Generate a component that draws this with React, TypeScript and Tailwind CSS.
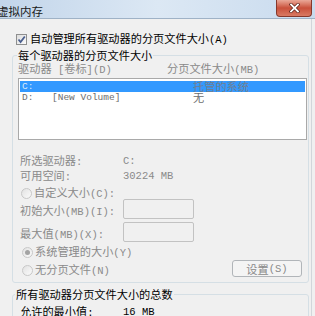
import React from 'react';

const cjk = "font-['Noto_Sans_CJK_SC',sans-serif]";
const mono = "font-['Liberation_Mono',monospace] text-[10.5px]";
const gray = 'text-[#8a8a8a]';

function Radio({ checked, label, hot }: { checked?: boolean; label: string; hot: string }) {
  return (
    <div className="flex h-[12px] items-center">
      <span className="flex h-[11px] w-[11px] items-center justify-center rounded-full border border-[#c8c8c8] bg-gradient-to-br from-[#e2e2e2] to-[#fbfbfb]">
        {checked && <span className="h-[5px] w-[5px] rounded-full bg-[#a3a3a3]" />}
      </span>
      <span className={`ml-[2px] text-[11.2px] leading-[12px] ${gray}`}>
        {label}
        <span className={mono}>{hot}</span>
      </span>
    </div>
  );
}

function Input() {
  return <div className="h-[20px] w-[71px] rounded-[2px] border border-[#c2c2c2] bg-[#f0f0f0]" />;
}

export default function App() {
  return (
    <div className={`flex h-[316px] w-[315px] flex-col overflow-hidden bg-[#f0f0f0] ${cjk}`}>
      {/* title bar */}
      <div className="flex h-[22px] items-start justify-between border-b border-[#9fb2c6] bg-gradient-to-r from-[#c2d5ea] via-[#dce8f4] to-[#c9dbee]">
        <span className="ml-[-3px] mt-[4px] text-[11.5px] leading-[14px] text-[#1a1a1a]">虚拟内存</span>
        <div className="mr-[3px] flex h-[17px] w-[36px] items-center justify-center rounded-b-[4px] border border-t-0 border-[#86382b] bg-gradient-to-b from-[#e9a898] via-[#c9503b] to-[#d97a63]">
          <svg width="11" height="10" viewBox="0 0 11 10">
            <path d="M2 1.5 L9 8.5 M9 1.5 L2 8.5" stroke="#5a1f16" strokeWidth="3.2" strokeLinecap="square" />
            <path d="M2 1.5 L9 8.5 M9 1.5 L2 8.5" stroke="#ffffff" strokeWidth="1.8" strokeLinecap="square" />
          </svg>
        </div>
      </div>

      <div className="flex flex-1">
        <div className="flex w-[311px] flex-col">
          {/* auto manage checkbox */}
          <div className="ml-[16px] mt-[14px] flex h-[12px] items-center">
            <span className="flex h-[11px] w-[11px] items-center justify-center border border-[#8e8f8f] bg-gradient-to-br from-[#dcdcdc] to-[#fcfcfc]">
              <svg width="9" height="9" viewBox="0 0 9 9">
                <path d="M1.5 4.5 L3.6 7 L7.8 1.5" fill="none" stroke="#4a5f8e" strokeWidth="1.8" />
              </svg>
            </span>
            <span className="ml-[3px] text-[11.2px] leading-[12px] text-black">
              自动管理所有驱动器的分页文件大小<span className={mono}>(A)</span>
            </span>
          </div>

          {/* per-drive group */}
          <fieldset className="ml-[12px] mt-[4px] w-[297px] rounded-[3px] border border-[#d5dfe5] pb-[5px]">
            <legend className="ml-[4px] px-[1px] text-[11.2px] leading-[12px] text-black">每个驱动器的分页文件大小</legend>
            <div className={`mt-[2px] flex h-[12px] items-center pl-[5px] text-[11.2px] leading-[12px] ${gray}`}>
              <span className="w-[149px]">
                驱动器<span className={mono}> [</span>卷标<span className={mono}>](D)</span>
              </span>
              <span>
                分页文件大小<span className={mono}>(MB)</span>
              </span>
            </div>

            <div className="ml-[5px] mt-[3px] h-[62px] w-[289px] border border-[#a9a9a9] bg-white pt-[2px]">
              <div className="mx-[1px] flex h-[11px] items-center bg-[#3399ff] pl-[2px]">
                <span className="w-[171px] font-['Liberation_Mono',monospace] text-[9.5px] leading-[11px] text-[#dbe9f8]">C:</span>
                <span className="text-[11.2px] leading-[11px] text-[#6f7f92]">托管的系统</span>
              </div>
              <div className="mx-[1px] flex h-[11px] items-center pl-[2px]">
                <span className="flex w-[171px] font-['Liberation_Mono',monospace] text-[9.5px] leading-[11px] text-[#6d6d6d]">
                  <span className="w-[30px]">D:</span>
                  <span>[New Volume]</span>
                </span>
                <span className="text-[11.2px] leading-[11px] text-[#6d6d6d]">无</span>
              </div>
            </div>

            <div className={`mt-[15px] flex h-[12px] items-center pl-[7px] text-[11.2px] leading-[12px] ${gray}`}>
              <span className="w-[103px]">
                所选驱动器<span className={mono}>:</span>
              </span>
              <span className={mono}>C:</span>
            </div>
            <div className={`mt-[3px] flex h-[12px] items-center pl-[7px] text-[11.2px] leading-[12px] ${gray}`}>
              <span className="w-[103px]">
                可用空间<span className={mono}>:</span>
              </span>
              <span className={mono}>30224 MB</span>
            </div>

            <div className="ml-[8px] mt-[5px]">
              <Radio label="自定义大小" hot="(C):" />
            </div>
            <div className="flex items-center pl-[7px]">
              <span className={`mt-[3px] w-[103px] text-[11.2px] leading-[12px] ${gray}`}>
                初始大小<span className={mono}>(MB)(I):</span>
              </span>
              <Input />
            </div>
            <div className="mt-[3px] flex items-center pl-[7px]">
              <span className={`mt-[3px] w-[103px] text-[11.2px] leading-[12px] ${gray}`}>
                最大值<span className={mono}>(MB)(X):</span>
              </span>
              <Input />
            </div>

            <div className="ml-[9px] mt-[4px]">
              <Radio checked label="系统管理的大小" hot="(Y)" />
            </div>
            <div className="mt-[2px] flex items-start justify-between pl-[9px] pr-[6px]">
              <div className="mt-[4px]">
                <Radio label="无分页文件" hot="(N)" />
              </div>
              <div className={`flex h-[17px] w-[70px] items-center justify-center rounded-[3px] border border-[#b1b5b9] bg-[#f4f4f4] text-[11.2px] leading-[12px] ${gray}`}>
                设置<span className={mono}>(S)</span>
              </div>
            </div>
          </fieldset>

          {/* totals group */}
          <fieldset className="ml-[12px] mt-[5px] w-[297px] rounded-[3px] border border-[#d5dfe5] pb-[5px]">
            <legend className="ml-[2px] px-[1px] text-[11.2px] leading-[12px] text-black">所有驱动器分页文件大小的总数</legend>
            <div className="mt-[6px] flex h-[12px] items-center pl-[7px] text-[11.2px] leading-[12px] text-black">
              <span className="w-[103px]">
                允许的最小值<span className={mono}>:</span>
              </span>
              <span className={mono}>16 MB</span>
            </div>
          </fieldset>
        </div>
        <div className="w-[4px] border-l border-[#d2d6da]" />
      </div>
    </div>
  );
}
